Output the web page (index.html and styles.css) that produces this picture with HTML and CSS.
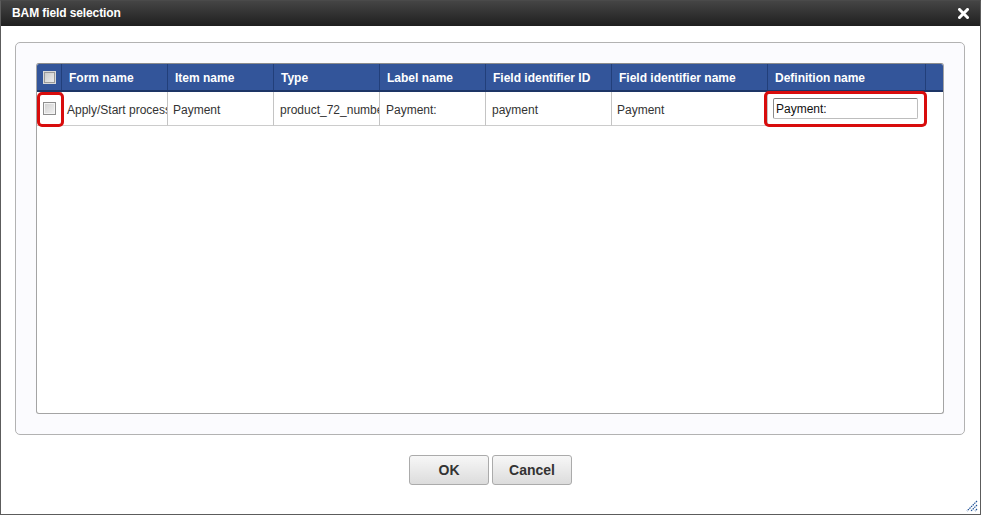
FILE: index.html
```html
<!DOCTYPE html>
<html>
<head>
<meta charset="utf-8">
<link rel="stylesheet" href="styles.css">
</head>
<body>
<div class="dialog">
  <div class="titlebar">
    <span class="title">BAM field selection</span>
    <svg class="close" width="11" height="11" viewBox="0 0 11 11"><path d="M1.5 1.5 L9.5 9.5 M9.5 1.5 L1.5 9.5" stroke="#fff" stroke-width="3" stroke-linecap="square"/></svg>
  </div>
  <div class="body">
    <div class="panel">
      <div class="grid">
        <div class="row head">
          <div class="cell chk"><span class="checkbox"></span></div>
          <div class="cell">Form name</div>
          <div class="cell">Item name</div>
          <div class="cell">Type</div>
          <div class="cell">Label name</div>
          <div class="cell">Field identifier ID</div>
          <div class="cell">Field identifier name</div>
          <div class="cell">Definition name</div>
          <div class="cell last"></div>
        </div>
        <div class="row data">
          <div class="cell chk"><span class="checkbox"></span></div>
          <div class="cell">Apply/Start process</div>
          <div class="cell">Payment</div>
          <div class="cell wide">product_72_number</div>
          <div class="cell wide">Payment:</div>
          <div class="cell wide">payment</div>
          <div class="cell">Payment</div>
          <div class="cell def"><input class="field" type="text" value="Payment:"></div>
        </div>
        <div class="mark mark-chk"></div>
        <div class="mark mark-def"></div>
      </div>
    </div>
    <div class="buttons">
      <button class="btn">OK</button>
      <button class="btn">Cancel</button>
    </div>
  </div>
  <svg class="grip" width="13" height="13" viewBox="0 0 13 13">
    <path d="M12 2 L2 12 M12 6 L6 12 M12 10 L10 12" stroke="#1c4f96" stroke-width="1.2" stroke-dasharray="1.5 0.8"/>
  </svg>
</div>
</body>
</html>
```

FILE: styles.css
```css
* { box-sizing: border-box; }
html, body { margin: 0; padding: 0; background: #fff; }
body { font-family: "Liberation Sans", Arial, sans-serif; font-size: 12px; color: #333; }

.dialog {
  position: relative;
  width: 981px;
  height: 515px;
  border: 1px solid #5c5c5c;
  border-top-color: #4a4a4a;
  display: flex;
  flex-direction: column;
  background: #fff;
}

.titlebar {
  height: 25px;
  flex: none;
  background: linear-gradient(#454545, #1f1f1f);
  display: flex;
  align-items: center;
  justify-content: space-between;
  padding: 0 11px 2px 11px;
}
.title {
  color: #fff;
  font-weight: bold;
  font-size: 12px;
  letter-spacing: -0.1px;
}
.close { display: block; margin-top: 2px; }

.body {
  flex: 1;
  display: flex;
  flex-direction: column;
  padding: 16px 15px 0 14px;
}

.panel {
  height: 393px;
  border: 1px solid #b2b2b2;
  border-radius: 5px;
  background: #fbfbfe;
  padding: 20px;
}

.grid {
  position: relative;
  height: 351px;
  border: 1px solid #a4a4a4;
  border-top-color: #8c8c8c;
  border-radius: 3px;
  background: #fff;
  overflow: hidden;
}

.row {
  display: grid;
  grid-template-columns: 25px 106px 106px 106px 106px 126px 156px 158px 17px;
}
.row.data { grid-template-columns: 25px 106px 106px 106px 106px 126px 156px 158px; }

.cell {
  border-right: 1px solid #c4c4c4;
  white-space: nowrap;
  overflow: hidden;
  display: flex;
  align-items: center;
}

.head {
  height: 28px;
  background: #33559a;
  border-bottom: 2px solid #1d3566;
}
.head .cell {
  color: #fff;
  font-weight: bold;
  padding-left: 7px;
  border-right: 1px solid #223f7a;
  padding-top: 1px;
}
.head .cell.last { border-right: none; }
.head .cell.chk { padding-left: 6px; }

.data { height: 34px; }
.data .cell {
  border-bottom: 1px solid #cccccc;
  padding-left: 5px;
  padding-top: 2px;
  color: #333;
}
.data .cell.wide { padding-left: 6px; }
.data .cell.chk { padding-left: 6px; padding-top: 0; }
.data .cell.def { border-right: none; padding-left: 5px; padding-top: 0; }

.checkbox {
  display: block;
  width: 13px;
  height: 13px;
  border: 1px solid #8e8e8e;
  background: linear-gradient(135deg, #cfcfcf, #f2f2f2);
  box-shadow: inset 0 0 0 1px #f4f4f4;
}
.head .checkbox { border-color: #d8d8d8; background: linear-gradient(135deg, #c8c8c8, #f0f0f0); box-shadow: inset 0 0 0 1px #9a9a9a; }

.field {
  width: 145px;
  height: 21px;
  margin: 0;
  padding: 1px 2px 0;
  border: 1px solid #bdbdbd;
  border-top-color: #7a7a7a;
  border-left-color: #8a8a8a;
  border-radius: 2px;
  font-family: "Liberation Sans", Arial, sans-serif;
  font-size: 12px;
  color: #111;
  background: #fff;
}

.mark {
  position: absolute;
  border: 3px solid #d80c0c;
  border-radius: 5px;
}
.mark-chk { left: 0; top: 28px; width: 27px; height: 35px; }
.mark-def { left: 727px; top: 27px; width: 163px; height: 36px; }

.buttons {
  display: flex;
  justify-content: center;
  gap: 3px;
  margin-top: 20px;
  padding-left: 1px;
}
.btn {
  width: 80px;
  height: 30px;
  border: 1px solid #ababab;
  border-radius: 3px;
  background: linear-gradient(#f7f7f7, #dcdcdc);
  font-family: "Liberation Sans", Arial, sans-serif;
  font-weight: bold;
  font-size: 14px;
  color: #333;
  padding: 0;
}

.grip {
  position: absolute;
  right: 2px;
  bottom: 2px;
}
```
